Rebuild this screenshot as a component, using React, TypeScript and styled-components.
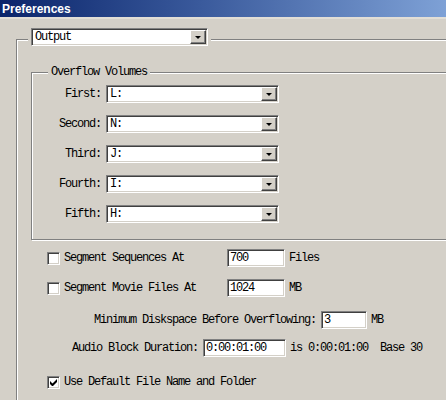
import React from "react";
import styled, { createGlobalStyle } from "styled-components";

const GlobalStyle = createGlobalStyle`
  html, body {
    margin: 0;
    padding: 0;
    background: #d4d0c8;
    overflow: hidden;
  }
`;

const Window = styled.div`
  width: 446px;
  height: 400px;
  overflow: hidden;
  background: #d4d0c8;
  font-family: "Liberation Mono", "DejaVu Sans Mono", monospace;
  font-size: 12px;
  letter-spacing: -1.2px;
  color: #000;
`;

const TitleBar = styled.div`
  height: 17px;
  display: flex;
  align-items: center;
  padding-left: 2px;
  background: linear-gradient(to right, #0a246a 0%, #3a5a9c 45%, #7ea1d6 100%);
  color: #fff;
  font-family: "Liberation Sans", Arial, sans-serif;
  font-weight: bold;
  font-size: 12px;
  letter-spacing: 0;
  border-bottom: 2px solid #e2ded6;
`;

const Content = styled.div`
  padding: 20px 0 0 16px;
`;

const GroupBox = styled.div<{ $top: number; $left: number; $pad?: string }>`
  position: relative;
  margin: ${(p) => p.$top}px 0 0 ${(p) => p.$left}px;
  width: 600px;
  padding: ${(p) => p.$pad || "0"};
  border: 1px solid #808080;
  box-shadow: inset 1px 1px 0 #fff, 1px 1px 0 #fff;
`;

const OuterGroup = styled(GroupBox)`
  min-height: 420px;
`;

const LegendSlot = styled.div<{ $left: number; $top: number }>`
  position: absolute;
  left: ${(p) => p.$left}px;
  top: ${(p) => p.$top}px;
  background: #d4d0c8;
  padding: 0 3px;
  line-height: 14px;
  white-space: pre;
`;

const Sunken = styled.div<{ $width: number }>`
  box-sizing: border-box;
  width: ${(p) => p.$width}px;
  height: 18px;
  display: flex;
  align-items: center;
  background: #fff;
  border-top: 1px solid #808080;
  border-left: 1px solid #808080;
  border-bottom: 1px solid #fff;
  border-right: 1px solid #fff;
  box-shadow: inset 1px 1px 0 #404040, inset -1px -1px 0 #d4d0c8;
`;

const FieldText = styled.span`
  flex: 1;
  padding-left: 3px;
  white-space: pre;
  line-height: 14px;
`;

const DropButton = styled.div`
  box-sizing: border-box;
  width: 16px;
  height: 14px;
  margin-right: 1px;
  display: flex;
  align-items: center;
  justify-content: center;
  background: #d4d0c8;
  border-top: 1px solid #fff;
  border-left: 1px solid #fff;
  border-right: 1px solid #404040;
  border-bottom: 1px solid #404040;
  box-shadow: inset -1px -1px 0 #808080;
`;

const Arrow = styled.span`
  width: 0;
  height: 0;
  border-left: 3px solid transparent;
  border-right: 3px solid transparent;
  border-top: 3px solid #000;
  margin-top: 1px;
`;

const VolumeGrid = styled.div`
  display: grid;
  grid-template-columns: 69px 173px;
  grid-auto-rows: 18px;
  column-gap: 5px;
  row-gap: 12px;
`;

const VolumeLabel = styled.span`
  display: flex;
  align-items: center;
  justify-content: flex-end;
`;

const Row = styled.div<{ $top: number; $left: number }>`
  display: flex;
  align-items: center;
  height: 18px;
  margin: ${(p) => p.$top}px 0 0 ${(p) => p.$left}px;
  white-space: pre;
`;

const Label = styled.span<{ $width?: number; $right?: boolean }>`
  width: ${(p) => (p.$width ? `${p.$width}px` : "auto")};
  text-align: ${(p) => (p.$right ? "right" : "left")};
  flex-shrink: 0;
`;

const Unit = styled.span`
  margin-left: 4px;
`;

const Box = styled.span`
  box-sizing: border-box;
  width: 13px;
  height: 13px;
  margin-right: 4px;
  flex-shrink: 0;
  display: flex;
  align-items: center;
  justify-content: center;
  background: #fff;
  border-top: 1px solid #808080;
  border-left: 1px solid #808080;
  border-bottom: 1px solid #fff;
  border-right: 1px solid #fff;
  box-shadow: inset 1px 1px 0 #404040, inset -1px -1px 0 #d4d0c8;
`;

function ComboBox({ width, value }: { width: number; value: string }) {
  return (
    <Sunken $width={width}>
      <FieldText>{value}</FieldText>
      <DropButton>
        <Arrow />
      </DropButton>
    </Sunken>
  );
}

function TextField({ width, value }: { width: number; value: string }) {
  return (
    <Sunken $width={width}>
      <FieldText style={{ paddingLeft: 2 }}>{value}</FieldText>
    </Sunken>
  );
}

function CheckBox({ checked }: { checked?: boolean }) {
  return (
    <Box>
      {checked && (
        <svg width="7" height="7" viewBox="0 0 7 7">
          <path d="M0 2v3l2 2h1l4-4V0L2.5 4.5z" fill="#000" />
        </svg>
      )}
    </Box>
  );
}

const volumes = [
  ["First:", "L:"],
  ["Second:", "N:"],
  ["Third:", "J:"],
  ["Fourth:", "I:"],
  ["Fifth:", "H:"],
];

export default function App() {
  return (
    <Window>
      <GlobalStyle />
      <TitleBar>Preferences</TitleBar>
      <Content>
        <OuterGroup $top={0} $left={0}>
          <LegendSlot $left={11} $top={-12} style={{ padding: "0 3px 0 3px" }}>
            <ComboBox width={177} value="Output" />
          </LegendSlot>

          <GroupBox $top={32} $left={14} $pad="12px 0 16px 0">
            <LegendSlot $left={16} $top={-8}>Overflow Volumes</LegendSlot>
            <VolumeGrid>
              {volumes.map(([label, drive]) => (
                <React.Fragment key={label}>
                  <VolumeLabel>{label}</VolumeLabel>
                  <ComboBox width={173} value={drive} />
                </React.Fragment>
              ))}
            </VolumeGrid>
          </GroupBox>

          <Row $top={9} $left={30}>
            <CheckBox />
            <Label $width={163}>Segment Sequences At</Label>
            <TextField width={58} value="700" />
            <Unit>Files</Unit>
          </Row>
          <Row $top={12} $left={30}>
            <CheckBox />
            <Label $width={163}>Segment Movie Files At</Label>
            <TextField width={58} value="1024" />
            <Unit>MB</Unit>
          </Row>
          <Row $top={14} $left={30}>
            <Label $width={269} $right>Minimum Diskspace Before Overflowing:</Label>
            <span style={{ width: 5 }} />
            <TextField width={46} value="3" />
            <Unit>MB</Unit>
          </Row>
          <Row $top={10} $left={30}>
            <Label $width={151} $right>Audio Block Duration:</Label>
            <span style={{ width: 5 }} />
            <TextField width={83} value="0:00:01:00" />
            <Unit>is 0:00:01:00  Base 30</Unit>
          </Row>
          <Row $top={16} $left={30}>
            <CheckBox checked />
            <Label>Use Default File Name and Folder</Label>
          </Row>
        </OuterGroup>
      </Content>
    </Window>
  );
}
